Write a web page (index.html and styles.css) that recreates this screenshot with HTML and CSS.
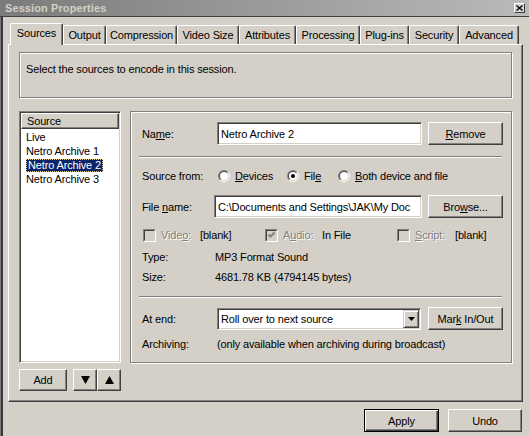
FILE: index.html
```html
<!DOCTYPE html>
<html>
<head>
<meta charset="utf-8">
<title>Session Properties</title>
<link rel="stylesheet" href="styles.css">
</head>
<body>
<div class="window">
  <div class="titlebar">
    <span class="title">Session Properties</span>
    <span class="close"><svg width="7" height="6" viewBox="0 0 7 6"><path d="M0.5 0.5 L6.5 5.5 M6.5 0.5 L0.5 5.5" stroke="#000" stroke-width="1.2" fill="none"/></svg></span>
  </div>
  <div class="tabs">
    <div class="tab active tab-sources">Sources</div>
    <div class="tab tab-output">Output</div>
    <div class="tab tab-compression">Compression</div>
    <div class="tab tab-video">Video Size</div>
    <div class="tab tab-attributes">Attributes</div>
    <div class="tab tab-processing">Processing</div>
    <div class="tab tab-plugins">Plug-ins</div>
    <div class="tab tab-security">Security</div>
    <div class="tab tab-advanced">Advanced</div>
  </div>
  <div class="panel">
    <div class="desc">Select the sources to encode in this session.</div>
    <div class="main">
      <div class="listbox">
        <div class="list-head">Source</div>
        <div class="item">Live</div>
        <div class="item">Netro Archive 1</div>
        <div class="item"><span class="sel">Netro Archive 2</span></div>
        <div class="item">Netro Archive 3</div>
      </div>
      <div class="group">
        <div class="row row-name">
          <span class="lbl lbl-75">Na<u>m</u>e:</span>
          <div class="field field-name">Netro Archive 2</div>
          <div class="btn side-btn"><span><u>R</u>emove</span></div>
        </div>
        <div class="sep sep-first"></div>
        <div class="row row-source">
          <span class="lbl lbl-76">Source from:</span>
          <span class="opt opt-devices"><span class="radio"><span class="radio-in"></span></span><span class="opt-text"><u>D</u>evices</span></span>
          <span class="opt opt-file"><span class="radio on"><span class="radio-in"></span></span><span class="opt-text">Fil<u>e</u></span></span>
          <span class="opt"><span class="radio"><span class="radio-in"></span></span><span class="opt-text"><u>B</u>oth device and file</span></span>
        </div>
        <div class="row row-file">
          <span class="lbl lbl-72">File <u>n</u>ame:</span>
          <div class="field field-file">C:\Documents and Settings\JAK\My Doc</div>
          <div class="btn side-btn"><span>Bro<u>w</u>se...</span></div>
        </div>
        <div class="row row-checks">
          <span class="cb-item cb-video"><span class="check"><span class="check-in"></span></span><span class="disabled">Vide<u>o</u>:</span></span>
          <span class="cb-value cb-value-video">[blank]</span>
          <span class="cb-item cb-audio"><span class="check"><span class="check-in"><svg width="9" height="9" viewBox="0 0 9 9"><path d="M1.5 3.5 L3.5 5.5 L7.5 1.5" stroke="#808080" stroke-width="2" fill="none"/></svg></span></span><span class="disabled">A<u>u</u>dio:</span></span>
          <span class="cb-value cb-value-audio">In File</span>
          <span class="cb-item cb-script"><span class="check"><span class="check-in"></span></span><span class="disabled"><u>S</u>cript:</span></span>
          <span class="cb-value">[blank]</span>
        </div>
        <div class="row row-type">
          <span class="lbl lbl-73">Type:</span>
          <span>MP3 Format Sound</span>
        </div>
        <div class="row row-size">
          <span class="lbl lbl-73">Size:</span>
          <span>4681.78 KB (4794145 bytes)</span>
        </div>
        <div class="sep sep-second"></div>
        <div class="row row-end">
          <span class="lbl lbl-75">At end:</span>
          <div class="combo">
            <span class="combo-text">Roll over to next source</span>
            <span class="combo-btn"><svg width="7" height="4" viewBox="0 0 7 4"><path d="M0 0 H7 L3.5 4 Z" fill="#000"/></svg></span>
          </div>
          <div class="btn side-btn mark-btn"><span>Mar<u>k</u> In/Out</span></div>
        </div>
        <div class="row row-arch">
          <span class="lbl lbl-75">Archiving:</span>
          <span>(only available when archiving during broadcast)</span>
        </div>
      </div>
    </div>
    <div class="tools">
      <div class="btn add-btn">Add</div>
      <div class="arrows">
        <div class="btn arrow-btn"><svg width="9" height="8" viewBox="0 0 9 8"><path d="M0 0 H9 L4.5 8 Z" fill="#000"/></svg></div>
        <div class="btn arrow-btn"><svg width="9" height="8" viewBox="0 0 9 8"><path d="M0 8 H9 L4.5 0 Z" fill="#000"/></svg></div>
      </div>
    </div>
  </div>
  <div class="footer">
    <div class="btn foot-btn default-btn">Apply</div>
    <div class="btn foot-btn">Undo</div>
  </div>
</div>
</body>
</html>
```

FILE: styles.css
```css
* { box-sizing: border-box; }
html, body { margin: 0; padding: 0; }
body {
  width: 529px;
  height: 436px;
  overflow: hidden;
  background: #d4d0c8;
  font-family: "Liberation Sans", Arial, sans-serif;
  font-size: 11px;
  letter-spacing: -0.15px;
  color: #000;
}
u { text-decoration: underline; text-underline-offset: 1px; }

.window {
  width: 529px;
  height: 436px;
  background: #d4d0c8;
  box-shadow: inset 1px 0 #7a7a7a, inset 3px 0 #3a3a3a;
}

/* title bar */
.titlebar {
  height: 17px;
  display: flex;
  align-items: center;
  justify-content: space-between;
  padding: 0 4px 0 5px;
  background: linear-gradient(to right, #7b7b7b, #bababa);
  border-bottom: 1px solid #404040;
}
.title {
  font-weight: bold;
  font-size: 11px;
  letter-spacing: 0.1px;
  color: #d4d0c8;
  line-height: 14px;
}
.close {
  width: 11px;
  height: 10px;
  display: flex;
  align-items: center;
  justify-content: center;
  background: #d4d0c8;
  border: 1px solid;
  border-color: #fff #404040 #404040 #fff;
  margin-top: -1px;
}

/* tabs */
.tabs {
  display: flex;
  align-items: flex-end;
  height: 27px;
  padding-left: 10px;
}
.tab {
  height: 19px;
  border: 1px solid;
  border-color: #fff #404040 transparent #fff;
  border-bottom: none;
  border-radius: 2px 2px 0 0;
  box-shadow: inset -1px 0 #808080;
  display: flex;
  align-items: center;
  justify-content: center;
  line-height: 14px;
  white-space: nowrap;
}
.tab.active {
  height: 22px;
  margin-bottom: -1px;
  padding-bottom: 3px;
  background: #d4d0c8;
  z-index: 1;
}
.tab-sources { width: 53px; }
.tab-output { width: 43px; }
.tab-compression { width: 71px; }
.tab-video { width: 62px; }
.tab-attributes { width: 57px; }
.tab-processing { width: 64px; }
.tab-plugins { width: 49px; }
.tab-security { width: 50px; }
.tab-advanced { width: 60px; }

/* panel */
.panel {
  margin-left: 8px;
  width: 515px;
  height: 358px;
  border: 1px solid;
  border-color: #fff #404040 #404040 #fff;
  box-shadow: inset -1px -1px #808080;
  padding: 7px 10px 0 10px;
}
.desc {
  height: 46px;
  border: 1px solid #808080;
  box-shadow: inset 1px 1px #fff, 1px 1px #fff;
  padding: 9px 0 0 6px;
  line-height: 14px;
}
.main {
  display: flex;
  gap: 9px;
  margin-top: 13px;
  height: 252px;
}

/* list */
.listbox {
  width: 102px;
  background: #fff;
  border: 1px solid;
  border-color: #808080 #fff #fff #808080;
  box-shadow: inset 1px 1px #404040, inset -1px -1px #d4d0c8;
  padding: 1px;
}
.list-head {
  height: 16px;
  background: #d4d0c8;
  border: 1px solid;
  border-color: #fff #404040 #404040 #fff;
  box-shadow: inset -1px -1px #808080;
  padding-left: 5px;
  line-height: 14px;
}
.item {
  height: 14px;
  line-height: 14px;
  padding-left: 5px;
  white-space: nowrap;
}
.item:nth-child(2) { margin-top: 1px; }
.sel {
  display: inline-block;
  height: 13px;
  padding: 0 2px;
  background: #0a246a;
  color: #fff;
  outline: 1px dotted #e8cf8a;
  outline-offset: -1px;
  line-height: 13px;
}

/* group */
.group {
  width: 382px;
  border: 1px solid #808080;
  box-shadow: inset 1px 1px #fff, 1px 1px #fff;
  padding: 10px 0 0 11px;
}
.row {
  display: flex;
  align-items: center;
  white-space: nowrap;
  line-height: 14px;
}
.lbl { flex: none; }
.lbl-72 { width: 72px; }
.lbl-73 { width: 73px; }
.lbl-75 { width: 75px; }
.lbl-76 { width: 76px; }

.row-name { height: 23px; }
.row-source { height: 14px; margin-top: 11px; }
.row-file { height: 23px; margin-top: 12px; }
.row-checks { height: 14px; margin-top: 10px; padding-left: 1px; }
.row-type { height: 14px; margin-top: 8px; }
.row-size { height: 14px; margin-top: 6px; }
.row-end { height: 23px; margin-top: 9px; }
.row-arch { height: 14px; margin-top: 7px; }

.sep {
  height: 2px;
  border-top: 1px solid #808080;
  border-bottom: 1px solid #fff;
  margin: 0 9px 0 -3px;
}
.sep-first { margin-top: 11px; }
.sep-second { margin-top: 12px; }

.field {
  height: 23px;
  background: #fff;
  border: 1px solid;
  border-color: #808080 #fff #fff #808080;
  box-shadow: inset 1px 1px #404040, inset -1px -1px #d4d0c8;
  padding-left: 3px;
  display: flex;
  align-items: center;
  overflow: hidden;
  flex: none;
}
.field-name { width: 205px; }
.field-file { width: 208px; }

.btn {
  background: #d4d0c8;
  border: 1px solid;
  border-color: #fff #404040 #404040 #fff;
  box-shadow: inset -1px -1px #808080;
  display: flex;
  align-items: center;
  justify-content: center;
  line-height: 14px;
  flex: none;
}
.side-btn {
  width: 75px;
  height: 23px;
  margin-left: 6px;
}
.mark-btn { margin-left: 7px; }

/* radios */
.opt { display: flex; align-items: center; flex: none; }
.opt-devices { width: 69px; }
.opt-file { width: 51px; }
.opt-text { margin-left: 5px; }
.radio {
  width: 12px;
  height: 12px;
  border-radius: 50%;
  border: 1px solid;
  border-color: #808080 #fff #fff #808080;
  flex: none;
}
.radio-in {
  width: 10px;
  height: 10px;
  border-radius: 50%;
  border: 1px solid;
  border-color: #404040 #d4d0c8 #d4d0c8 #404040;
  background: #fff;
  display: flex;
  align-items: center;
  justify-content: center;
}
.radio.on .radio-in::after {
  content: "";
  width: 4px;
  height: 4px;
  border-radius: 50%;
  background: #000;
}

/* checkboxes */
.cb-item { display: flex; align-items: center; gap: 5px; flex: none; }
.cb-video { width: 57px; }
.cb-audio { width: 57px; }
.cb-script { width: 58px; }
.cb-value-video { width: 65px; }
.cb-value-audio { width: 75px; }
.check {
  width: 13px;
  height: 13px;
  border: 1px solid;
  border-color: #808080 #fff #fff #808080;
  flex: none;
}
.check-in {
  width: 11px;
  height: 11px;
  border: 1px solid;
  border-color: #404040 #d4d0c8 #d4d0c8 #404040;
  background: #d4d0c8;
  display: flex;
}
.disabled {
  color: #808080;
  text-shadow: 1px 1px 0 #fff;
}

/* combo */
.combo {
  width: 204px;
  height: 22px;
  margin-top: 1px;
  background: #fff;
  border: 1px solid;
  border-color: #808080 #fff #fff #808080;
  box-shadow: inset 1px 1px #404040, inset -1px -1px #d4d0c8;
  padding: 1px;
  display: flex;
  align-items: center;
  flex: none;
}
.combo-text { flex: 1; padding-left: 2px; }
.combo-btn {
  width: 16px;
  height: 18px;
  background: #d4d0c8;
  border: 1px solid;
  border-color: #d4d0c8 #404040 #404040 #d4d0c8;
  box-shadow: inset 1px 1px #fff, inset -1px -1px #808080;
  display: flex;
  align-items: center;
  justify-content: center;
}

/* tools */
.tools {
  display: flex;
  gap: 6px;
  margin-top: 6px;
}
.add-btn { width: 48px; height: 22px; }
.arrows { display: flex; }
.arrow-btn { width: 24px; height: 22px; }

/* footer */
.footer {
  display: flex;
  justify-content: flex-end;
  gap: 9px;
  padding-right: 7px;
  margin-top: 7px;
}
.foot-btn { height: 23px; width: 74px; }
.default-btn {
  width: 75px;
  border-color: #000;
  box-shadow: inset 1px 1px #fff, inset -1px -1px #404040, inset -2px -2px #808080;
}
```
